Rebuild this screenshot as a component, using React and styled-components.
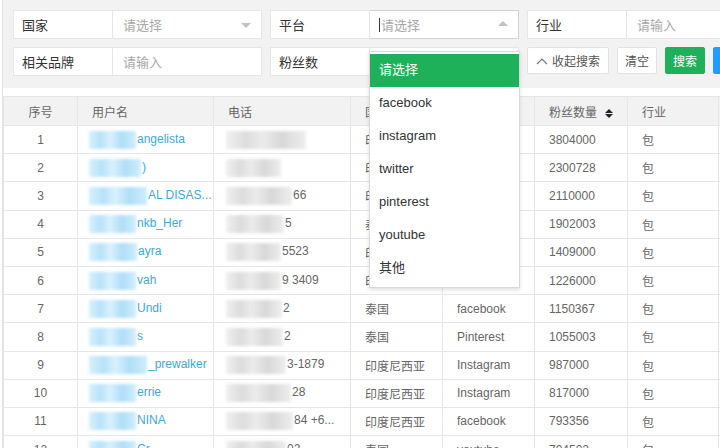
import React from 'react';
import styled, { createGlobalStyle } from 'styled-components';

const GlobalStyle = createGlobalStyle`
  html, body {
    margin: 0;
    padding: 0;
    background: #fff;
    font-family: "Liberation Sans", "Noto Sans CJK SC", sans-serif;
    overflow: hidden;
  }
`;

const GREEN = '#1fb15a';

const Page = styled.div`
  width: 720px;
  height: 448px;
  overflow: hidden;
  padding-left: 2px;
  box-sizing: border-box;
`;

const Inner = styled.div`
  border-left: 1px solid #e2e2e2;
  height: 100%;
`;

const FilterPanel = styled.div`
  background: #f2f2f2;
  height: 88px;
  box-sizing: border-box;
  padding: 10px 0 0 10px;
  display: flex;
  flex-direction: column;
  gap: 8px;
`;

const FilterRow = styled.div`
  display: flex;
  gap: 8px;
  align-items: flex-start;
  white-space: nowrap;
`;

const Field = styled.div`
  display: flex;
  width: 249px;
  height: 29px;
  flex-shrink: 0;
  position: relative;
`;

const Label = styled.div`
  width: 100px;
  flex-shrink: 0;
  box-sizing: border-box;
  background: #fff;
  border: 1px solid #e6e6e6;
  padding-left: 8px;
  font-size: 13px;
  color: #333;
  display: flex;
  align-items: center;
`;

const Control = styled.div`
  flex: 1;
  box-sizing: border-box;
  background: #fff;
  border: 1px solid ${({ focused }) => (focused ? '#d2d2d2' : '#e6e6e6')};
  border-left: none;
  padding-left: ${({ focused }) => (focused ? 9 : 10)}px;
  font-size: 13px;
  color: #a8a8a8;
  display: flex;
  align-items: center;
  position: relative;
`;

const Caret = styled.span`
  display: inline-block;
  width: 1px;
  height: 14px;
  background: #333;
  margin-right: 1px;
`;

const Arrow = styled.span`
  position: absolute;
  right: 10px;
  top: 12px;
  width: 0;
  height: 0;
  border-left: 5px solid transparent;
  border-right: 5px solid transparent;
  ${({ up }) =>
    up ? 'border-bottom: 5px solid #c2c2c2; top: 10px;' : 'border-top: 5px solid #c2c2c2;'}
`;

const Dropdown = styled.ul`
  position: absolute;
  left: 99px;
  top: 41px;
  width: 151px;
  margin: 0;
  padding: 2px 0 0;
  list-style: none;
  background: #fff;
  border: 1px solid #d9d9d9;
  box-shadow: 0 2px 4px rgba(0, 0, 0, 0.12);
  box-sizing: border-box;
  height: 237px;
  z-index: 10;
`;

const Option = styled.li`
  height: 33px;
  line-height: 31px;
  padding-left: 9px;
  font-size: 13px;
  color: ${({ active }) => (active ? '#fff' : '#333')};
  background: ${({ active }) => (active ? GREEN : 'transparent')};
`;

const Buttons = styled.div`
  display: flex;
  gap: 8px;
`;

const Button = styled.div`
  height: 27px;
  box-sizing: border-box;
  padding: 0 ${({ pad }) => pad || 7}px;
  border: 1px solid ${({ bg }) => bg || '#e2e2e2'};
  background: ${({ bg }) => bg || '#fff'};
  color: ${({ bg }) => (bg ? '#fff' : '#555')};
  font-size: 12px;
  display: flex;
  align-items: center;
  gap: 4px;
  border-radius: 2px;
`;

const Table = styled.table`
  margin-top: 8px;
  border-collapse: collapse;
  table-layout: fixed;
  width: 815px;
  font-size: 12px;
  color: #666;
`;

const Th = styled.th`
  height: 28px;
  padding: 0 0 0 ${({ center }) => (center ? 0 : 14)}px;
  text-align: ${({ center }) => (center ? 'center' : 'left')};
  font-weight: normal;
  background: #f2f2f2;
  border: 1px solid #e6e6e6;
  white-space: nowrap;
  overflow: hidden;
`;

const Td = styled.td`
  height: 27.2px;
  padding: 0 0 0 ${({ center }) => (center ? 0 : 14)}px;
  text-align: ${({ center }) => (center ? 'center' : 'left')};
  border: 1px solid #e6e6e6;
  white-space: nowrap;
  overflow: hidden;
`;

const NameCell = styled(Td)`
  padding-left: 11px;
  color: #3ea8da;
`;

const PhoneCell = styled(Td)`
  padding-left: 12px;
`;

const Mask = styled.span`
  display: inline-block;
  vertical-align: middle;
  height: 18px;
  margin-right: 1px;
  filter: blur(1.6px);
  background: ${({ tone }) =>
    tone === 'blue'
      ? 'linear-gradient(90deg, #d6f0fd 0%, #b7e2f9 25%, #d9f1fd 45%, #afdef8 70%, #d0edfc 100%)'
      : 'linear-gradient(90deg, #f0f0f0 0%, #dcdcdc 25%, #ebebeb 45%, #d8d8d8 70%, #eeeeee 100%)'};
`;

const SortIcon = styled.span`
  display: inline-flex;
  flex-direction: column;
  gap: 1px;
  vertical-align: middle;
  margin-left: 8px;
  &::before,
  &::after {
    content: '';
    border-left: 4px solid transparent;
    border-right: 4px solid transparent;
  }
  &::before {
    border-bottom: 4px solid #222;
  }
  &::after {
    border-top: 4px solid #222;
  }
`;

const rows = [
  ['angelista', 47, '', 80, '印度尼西亚', 'facebook', '3804000'],
  [')', 52, '', 55, '印度尼西亚', 'instagram', '2300728'],
  ['AL DISAS...', 58, '66', 66, '印度尼西亚', 'facebook', '2110000'],
  ['nkb_Her', 47, '5', 58, '泰国', 'facebook', '1902003'],
  ['ayra', 48, '5523', 55, '印度尼西亚', 'instagram', '1409000'],
  ['vah', 47, '9 3409', 55, '印度尼西亚', 'instagram', '1226000'],
  ['Undi', 47, '2', 56, '泰国', 'facebook', '1150367'],
  ['s', 47, '2', 57, '泰国', 'Pinterest', '1055003'],
  ['_prewalker', 58, '3-1879', 60, '印度尼西亚', 'Instagram', '987000'],
  ['errie', 47, '28', 65, '印度尼西亚', 'Instagram', '817000'],
  ['NINA', 47, '84 +6...', 67, '印度尼西亚', 'facebook', '793356'],
  ['Cr', 47, '02', 60, '泰国', 'youtube', '704502'],
];

const options = ['请选择', 'facebook', 'instagram', 'twitter', 'pinterest', 'youtube', '其他'];

export default function App() {
  return (
    <Page>
      <GlobalStyle />
      <Inner>
        <FilterPanel>
          <FilterRow>
            <Field>
              <Label>国家</Label>
              <Control>
                请选择
                <Arrow />
              </Control>
            </Field>
            <Field>
              <Label>平台</Label>
              <Control focused>
                <Caret />
                请选择
                <Arrow up />
              </Control>
              <Dropdown>
                {options.map((o, i) => (
                  <Option key={o} active={i === 0}>
                    {o}
                  </Option>
                ))}
              </Dropdown>
            </Field>
            <Field>
              <Label>行业</Label>
              <Control>请输入</Control>
            </Field>
          </FilterRow>
          <FilterRow>
            <Field>
              <Label>相关品牌</Label>
              <Control>请输入</Control>
            </Field>
            <Field>
              <Label>粉丝数</Label>
              <Control />
            </Field>
            <Buttons>
              <Button pad={8}>
                <svg width="12" height="8" viewBox="0 0 12 8">
                  <path d="M1 7 L6 2 L11 7" fill="none" stroke="#777" strokeWidth="1.2" />
                </svg>
                收起搜索
              </Button>
              <Button>清空</Button>
              <Button bg={GREEN}>搜索</Button>
              <Button bg="#1e9fff">导出</Button>
            </Buttons>
          </FilterRow>
        </FilterPanel>
        <Table>
          <colgroup>
            <col style={{ width: 74 }} />
            <col style={{ width: 136 }} />
            <col style={{ width: 137 }} />
            <col style={{ width: 92 }} />
            <col style={{ width: 92 }} />
            <col style={{ width: 93 }} />
            <col style={{ width: 91 }} />
            <col style={{ width: 100 }} />
          </colgroup>
          <thead>
            <tr>
              <Th center>序号</Th>
              <Th>用户名</Th>
              <Th>电话</Th>
              <Th>国家</Th>
              <Th>平台</Th>
              <Th>
                粉丝数量
                <SortIcon />
              </Th>
              <Th>行业</Th>
              <Th>操作</Th>
            </tr>
          </thead>
          <tbody>
            {rows.map(([name, nw, phone, pw, country, platform, fans], i) => (
              <tr key={i}>
                <Td center>{i + 1}</Td>
                <NameCell>
                  <Mask tone="blue" style={{ width: nw }} />
                  {name}
                </NameCell>
                <PhoneCell>
                  <Mask style={{ width: pw }} />
                  {phone}
                </PhoneCell>
                <Td>{country}</Td>
                <Td>{platform}</Td>
                <Td>{fans}</Td>
                <Td>包</Td>
                <Td />
              </tr>
            ))}
          </tbody>
        </Table>
      </Inner>
    </Page>
  );
}
